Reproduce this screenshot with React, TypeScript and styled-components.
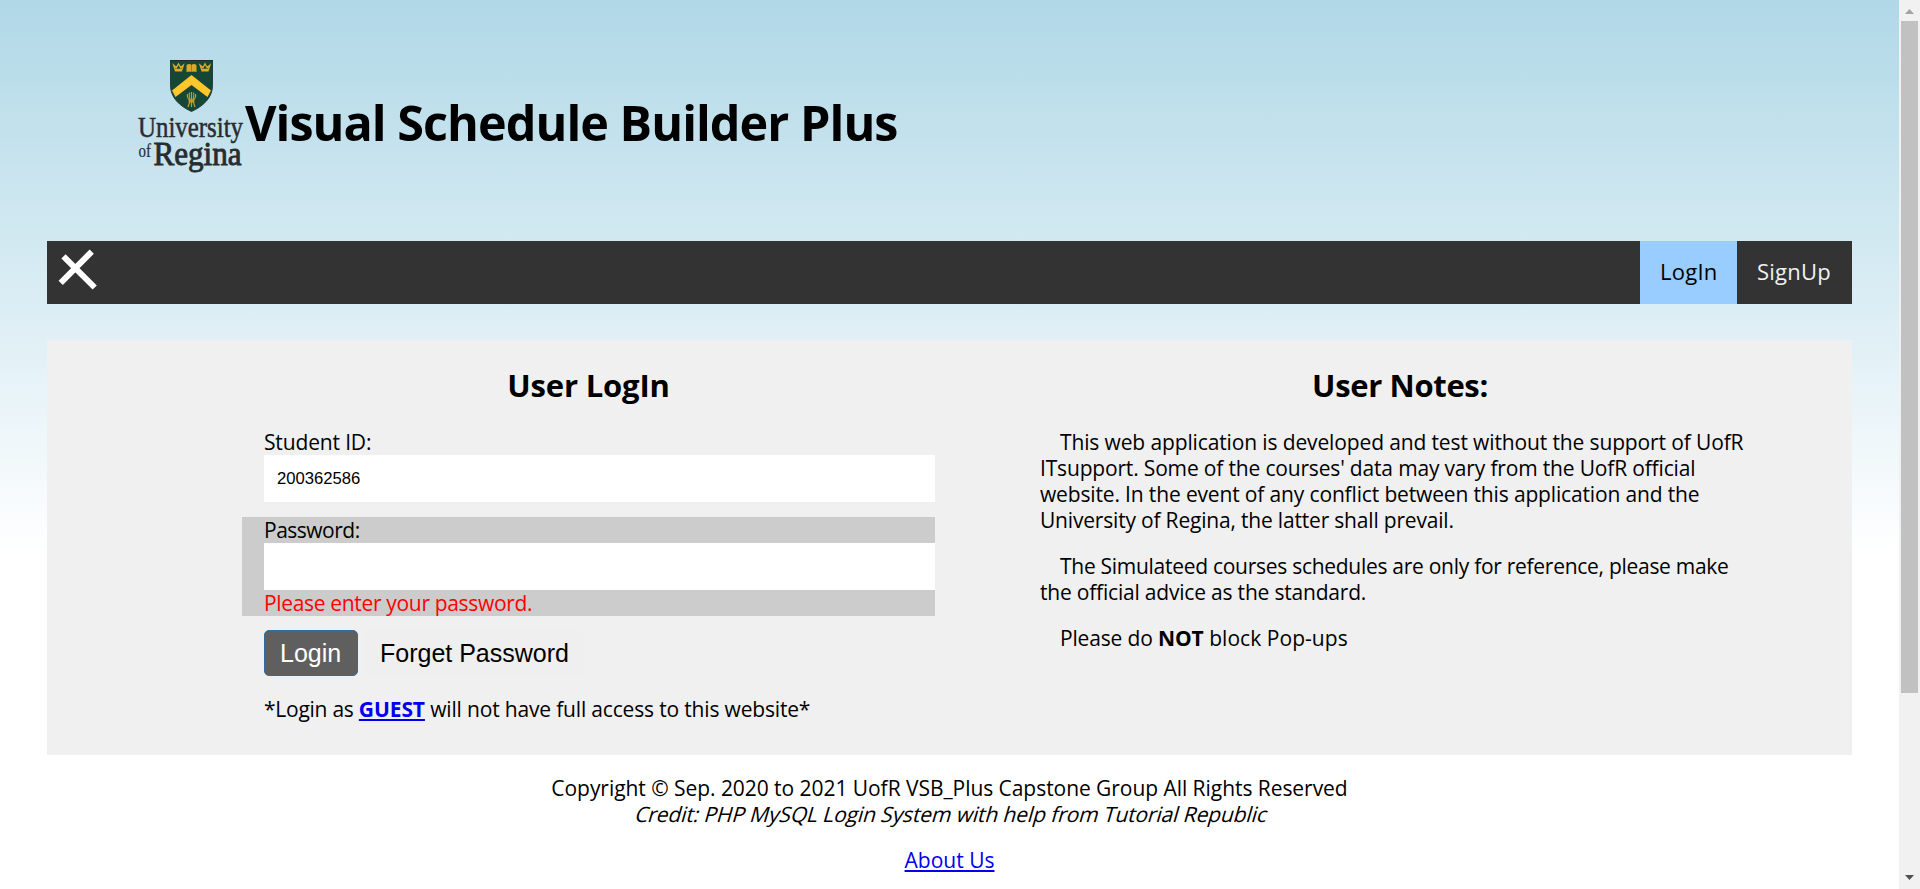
import React from "react";
import styled, { createGlobalStyle } from "styled-components";

const GlobalStyle = createGlobalStyle`
  * { box-sizing: border-box; }
  body {
    margin: 0;
    overflow: hidden;
    background: #fff;
    color: #000;
    font-family: "Open Sans", "Noto Sans", sans-serif;
    font-size: 21px;
    line-height: 26px;
  }
`;

const Window = styled.div`
  display: flex;
  height: 889px;
  overflow: hidden;
`;

const Page = styled.div`
  flex: 1;
  padding: 0 47px;
  background: linear-gradient(to bottom, #b0d8e7 0, #fff 555px);
`;

const Header = styled.header`
  display: flex;
  height: 241px;
  padding: 58px 0 0 90px;
`;

const Logo = styled.svg`
  display: block;
  flex: none;
  width: 108px;
  height: 116px;
  overflow: visible;
`;

const Title = styled.h1`
  margin: 36px 0 0;
  font-size: 48.5px;
  line-height: 56px;
  letter-spacing: -0.95px;
  white-space: nowrap;
`;

const Nav = styled.nav`
  display: flex;
  justify-content: space-between;
  height: 63px;
  background: #333;
`;

const MenuIcon = styled.svg`
  display: block;
  width: 63px;
  height: 63px;
`;

const NavLinks = styled.div`
  display: flex;
`;

const NavLink = styled.a<{ $active?: boolean; $width: number }>`
  width: ${(p) => p.$width}px;
  padding: 17px 0 0 20px;
  font-size: 22px;
  letter-spacing: 0.25px;
  background: ${(p) => (p.$active ? "#99ccff" : "transparent")};
  color: ${(p) => (p.$active ? "#000" : "#f2f2f2")};
`;

const Panel = styled.main`
  display: flex;
  height: 415px;
  margin-top: 36px;
  background: #f0f0f0;
`;

const Column = styled.section<{ $left: number; $width: number }>`
  width: ${(p) => p.$width}px;
  margin-left: ${(p) => p.$left}px;
`;

const Heading = styled.h2<{ $tracking: number }>`
  margin: 25px 0 23px;
  font-size: 31px;
  line-height: 41px;
  letter-spacing: ${(p) => p.$tracking}px;
  text-align: center;
`;

const Field = styled.div<{ $error?: boolean }>`
  padding-left: 22px;
  margin-bottom: 15px;
  background: ${(p) => (p.$error ? "#ccc" : "transparent")};
`;

const Label = styled.label`
  display: block;
`;

const Input = styled.input`
  display: block;
  width: 100%;
  height: 47px;
  padding: 0 13px;
  border: 0;
  outline: 0;
  background: #fff;
  color: #000;
  font: 16.667px "Liberation Sans", Arial, sans-serif;
`;

const ErrorText = styled.span`
  display: block;
  color: #f00;
`;

const Actions = styled.div`
  display: flex;
  gap: 6px;
  margin: -1px 0 20px 22px;
`;

const Button = styled.button<{ $primary?: boolean }>`
  width: ${(p) => (p.$primary ? 94 : 221)}px;
  height: 46px;
  padding: 0 0 0 15px;
  border: 1px solid ${(p) => (p.$primary ? "#2e6da4" : "#efefef")};
  border-radius: 5px;
  background: ${(p) => (p.$primary ? "#5f5f5f" : "#efefef")};
  color: ${(p) => (p.$primary ? "#fff" : "#000")};
  font: 25px "Liberation Sans", Arial, sans-serif;
  text-align: left;
`;

const Text = styled.span<{ $tracking: number }>`
  letter-spacing: ${(p) => p.$tracking}px;
  white-space: pre;
`;

const GuestNote = styled.p`
  margin: 0 0 0 22px;
  white-space: nowrap;
`;

const Link = styled.a`
  color: #00e;
  text-decoration: underline;
  text-decoration-thickness: 2px;
  text-underline-offset: 2px;
`;

const Note = styled.p`
  margin: 0 0 20px 1px;
  text-indent: 20px;
  white-space: nowrap;
`;

const Footer = styled.footer`
  padding-top: 20px;
  text-align: center;
`;

const FooterLine = styled.p<{ $gap?: number }>`
  margin: ${(p) => p.$gap ?? 0}px 0 0;
`;

const Credit = styled(Text)`
  display: inline-block;
  margin-left: 4px;
  transform: skewX(-16deg);
`;

const Scrollbar = styled.aside`
  display: flex;
  flex-direction: column;
  align-items: center;
  width: 21px;
  background: #f1f1f1;
`;

const ScrollArrow = styled.svg`
  display: block;
  width: 21px;
  height: 21px;
`;

const ScrollThumb = styled.div`
  width: 17px;
  height: 672px;
  margin-bottom: auto;
  background: #c1c1c1;
`;

const Crown = ({ x }: { x: number }) => (
  <g transform={`translate(${x} 5)`} fill="#d9ac2d" stroke="#d9ac2d">
    <path d="M.7 2.2 2 6.3h7l1.300-4.100L7.600 4.600 5.500.8 3.400 4.600Z" fill="none" strokeWidth="1.300" />
    <path d="M1.800 7.600h7.400" strokeWidth="1.800" />
  </g>
);

const UniversityLogo = () => (
  <Logo viewBox="0 0 108 116">
    <path d="M33.500 2.500h42v25c0 12-9 20.500-21 26-12-5.500-21-14-21-26Z" fill="#154734" stroke="#253c38" />
    <path d="M33 2.500h43" stroke="#202b2b" strokeWidth="1.200" />
    <Crown x={36} />
    <Crown x={62.500} />
    <path d="M49.500 7q3-2 5 0 2-2 5 0v7q-3-1-5 0-2-1-5 0Z" fill="#d9a928" />
    <path d="M54.500 7v7" stroke="#765f21" strokeWidth=".6" />
    <path d="M54.500 17 74 32.500 70.500 39 54.500 27 38.500 39 35 32.500Z" fill="#ffc72c" />
    <g fill="none" stroke="#c99a27" strokeWidth="1.200">
      <path d="M50.500 36q-1 4 3 7M58.500 36q1 4-3 7M52.500 34.500q-1 5 1.500 9M56.500 34.500q1 5-1.500 9M54.500 34v15M53 43l-2 6M56 43l2 6" />
      <path d="M51.500 43.500h6" strokeWidth="1.800" />
    </g>
    <g fill="#272c30" stroke="#272c30" fontFamily="Liberation Serif, Times New Roman, serif">
      <text x="1" y="79" fontSize="28.500" strokeWidth=".5" textLength="105" lengthAdjust="spacingAndGlyphs">University</text>
      <text x="1.500" y="98.500" fontSize="18" strokeWidth=".2" textLength="12.500" lengthAdjust="spacingAndGlyphs">of</text>
      <text x="16.500" y="106.500" fontSize="34" strokeWidth=".9" textLength="88" lengthAdjust="spacingAndGlyphs">Regina</text>
    </g>
  </Logo>
);

export default function App() {
  return (
    <>
      <GlobalStyle />
      <Window>
        <Page>
          <Header>
            <UniversityLogo />
            <Title>Visual Schedule Builder Plus</Title>
          </Header>
          <Nav>
            <MenuIcon viewBox="0 0 63 63" stroke="#fff" strokeWidth="6">
              <path d="M16.500 15.300 47.700 46.500M44.700 10.700 13.700 41.800" />
            </MenuIcon>
            <NavLinks>
              <NavLink $active $width={97}>LogIn</NavLink>
              <NavLink $width={115}>SignUp</NavLink>
            </NavLinks>
          </Nav>
          <Panel>
            <Column $left={195} $width={693}>
              <Heading $tracking={-0.15}>User LogIn</Heading>
              <Field>
                <Label><Text $tracking={-0.15}>Student ID:</Text></Label>
                <Input defaultValue="200362586" />
              </Field>
              <Field $error>
                <Label><Text $tracking={-0.5}>Password:</Text></Label>
                <Input type="password" />
                <ErrorText><Text $tracking={-0.33}>Please enter your password.</Text></ErrorText>
              </Field>
              <Actions>
                <Button $primary>Login</Button>
                <Button>Forget Password</Button>
              </Actions>
              <GuestNote>
                <Text $tracking={-0.25}>*Login as </Text>
                <Link><b><Text $tracking={-0.1}>GUEST</Text></b></Link>
                <Text $tracking={-0.17}> will not have full access to this website*</Text>
              </GuestNote>
            </Column>
            <Column $left={104} $width={722}>
              <Heading $tracking={-0.35}>User Notes:</Heading>
              <Note>
                <Text $tracking={-0.13}>This web application is developed and test without the support of UofR</Text><br />
                <Text $tracking={-0.17}>ITsupport. Some of the courses' data may vary from the UofR official</Text><br />
                <Text $tracking={-0.15}>website. In the event of any conflict between this application and the</Text><br />
                <Text $tracking={-0.19}>University of Regina, the latter shall prevail.</Text>
              </Note>
              <Note>
                <Text $tracking={-0.28}>The Simulateed courses schedules are only for reference, please make</Text><br />
                <Text $tracking={-0.2}>the official advice as the standard.</Text>
              </Note>
              <Note>
                <Text $tracking={-0.16}>Please do </Text>
                <b><Text $tracking={-0.1}>NOT</Text></b>
                <Text $tracking={0.05}> block Pop-ups</Text>
              </Note>
            </Column>
          </Panel>
          <Footer>
            <FooterLine>
              <Text $tracking={-0.05}>Copyright © Sep. 2020 to 2021 UofR VSB_Plus Capstone Group All Rights Reserved</Text>
            </FooterLine>
            <FooterLine>
              <Credit $tracking={-0.11}>Credit: PHP MySQL Login System with help from Tutorial Republic</Credit>
            </FooterLine>
            <FooterLine $gap={20}>
              <Link>About Us</Link>
            </FooterLine>
          </Footer>
        </Page>
        <Scrollbar>
          <ScrollArrow viewBox="0 0 21 21"><path d="M6 14h9l-4.500-5Z" fill="#a3a3a3" /></ScrollArrow>
          <ScrollThumb />
          <ScrollArrow viewBox="0 0 21 21"><path d="M6 7h9l-4.500 5Z" fill="#505050" /></ScrollArrow>
        </Scrollbar>
      </Window>
    </>
  );
}
